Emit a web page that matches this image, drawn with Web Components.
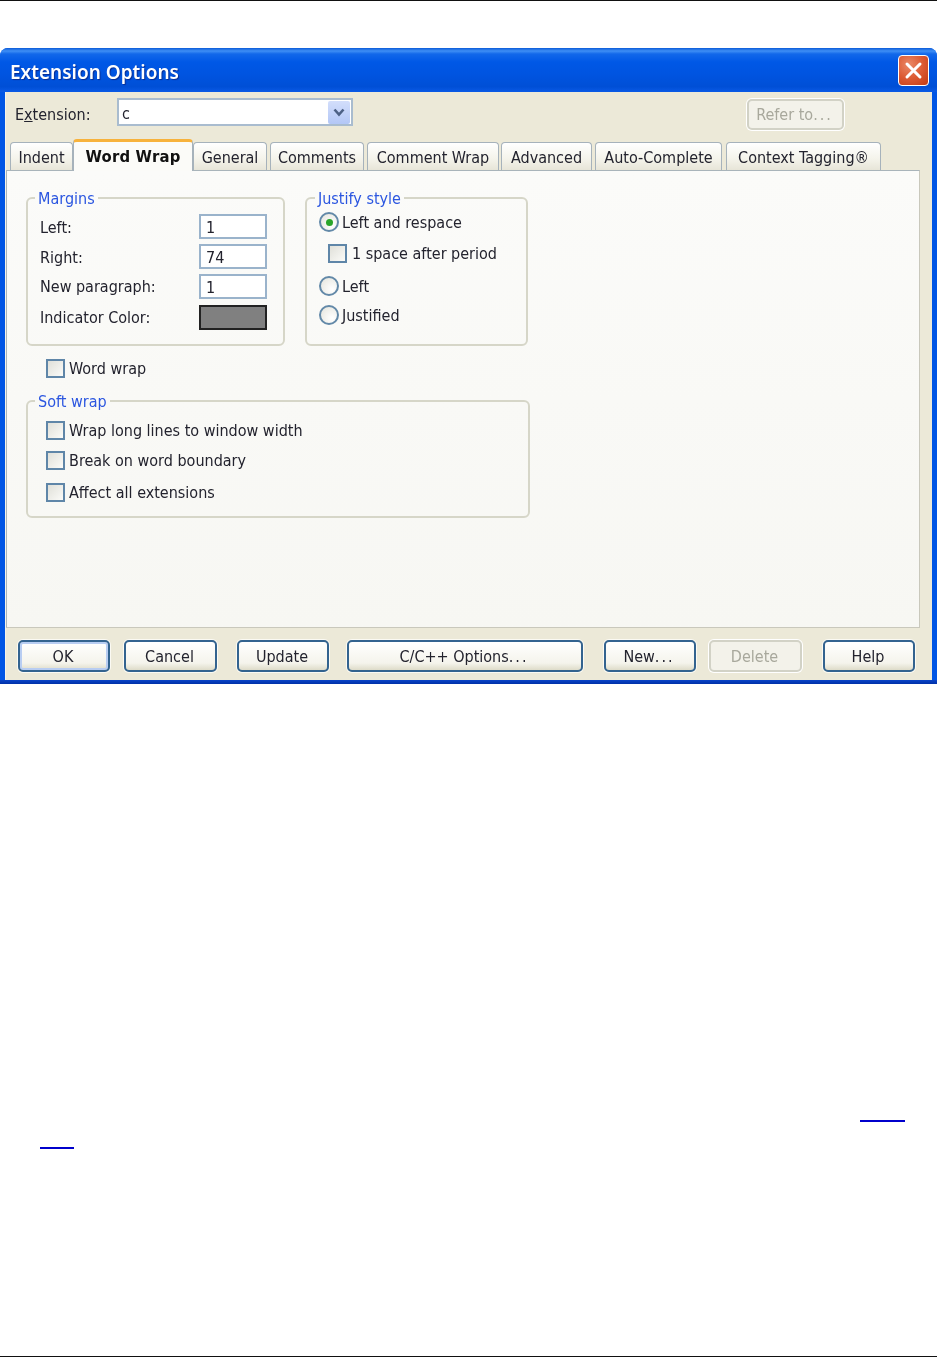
<!DOCTYPE html>
<html>
<head>
<meta charset="utf-8">
<title>Extension Options</title>
<style>
    html, body { margin: 0; padding: 0; background: #fff; }
    body { font: 16px "DejaVu Sans", "Noto Sans", sans-serif; font-stretch: condensed; color: #23232e; }
    .dots { letter-spacing: 2px; }
</style>
</head>
<body>
<ext-page>
    <ext-window>
        <span slot="title">Extension Options</span>
        <ext-toolbar>
            <span>E<u>x</u>tension:</span>
            <ext-combo>c</ext-combo>
            <ext-button disabled style="--w:97px;--h:31px;--ml:394px;--mt:1px">Refer to<span class="dots">...</span></ext-button>
        </ext-toolbar>
        <ext-tabs>
            <ext-tab style="--w:63px">Indent</ext-tab>
            <ext-tab selected style="--w:120px">Word Wrap</ext-tab>
            <ext-tab style="--w:74px;--mr:3px">General</ext-tab>
            <ext-tab style="--w:94px;--mr:3px">Comments</ext-tab>
            <ext-tab style="--w:132px;--mr:2px">Comment Wrap</ext-tab>
            <ext-tab style="--w:91px;--mr:3px">Advanced</ext-tab>
            <ext-tab style="--w:127px;--mr:4px">Auto-Complete</ext-tab>
            <ext-tab style="--w:155px">Context Tagging®</ext-tab>
        </ext-tabs>
        <ext-pane>
            <ext-columns>
                <ext-group legend="Margins" style="--w:259px;--h:157px;--pt:7px;--pl:12px;--lm:7px">
                    <ext-form>
                        <span>Left:</span><ext-field>1</ext-field>
                        <span style="--d:1px">Right:</span><ext-field>74</ext-field>
                        <span style="--d:0px">New paragraph:</span><ext-field>1</ext-field>
                        <span>Indicator Color:</span><ext-swatch></ext-swatch>
                    </ext-form>
                </ext-group>
                <ext-group legend="Justify style" style="--w:223px;--h:157px;--pt:5px;--pl:12px;--lm:8px">
                    <ext-radio checked>Left and respace</ext-radio>
                    <ext-check style="--ml:9px;--mt:11px;--cg:5px">1 space after period</ext-check>
                    <ext-radio style="--mt:13px">Left</ext-radio>
                    <ext-radio style="--mt:9px">Justified</ext-radio>
                </ext-group>
            </ext-columns>
            <ext-check style="--ml:20px;--mt:12px">Word wrap</ext-check>
            <ext-group legend="Soft wrap" style="--w:504px;--h:126px;--pt:10px;--pl:18px;--lm:7px;--gap:14px">
                <ext-check>Wrap long lines to window width</ext-check>
                <ext-check style="--mt:10px">Break on word boundary</ext-check>
                <ext-check style="--mt:12px">Affect all extensions</ext-check>
            </ext-group>
        </ext-pane>
        <ext-footer>
            <ext-button default style="--w:92px">OK</ext-button>
            <ext-button style="--w:93px;--ml:14px">Cancel</ext-button>
            <ext-button style="--w:92px;--ml:20px">Update</ext-button>
            <ext-button style="--w:236px;--ml:18px">C/C++ Options<span class="dots">...</span></ext-button>
            <ext-button style="--w:92px;--ml:21px">New<span class="dots">...</span></ext-button>
            <ext-button disabled style="--w:93px;--ml:13px">Delete</ext-button>
            <ext-button style="--w:92px;--ml:21px">Help</ext-button>
        </ext-footer>
    </ext-window>
    <ext-links></ext-links>
</ext-page>

<script>
(function () {
    // every element is a template + shadow root, only the markup differs
    function define(name, html, attrs) {
        let template = document.createElement("template");
        template.innerHTML = html;
        customElements.define(name, class extends HTMLElement {
            constructor() {
                super();
                let shadowRoot = this.attachShadow({ mode: "open" });
                shadowRoot.appendChild(template.content.cloneNode(true));
                if (attrs) attrs(this, shadowRoot);
            }
        });
    }

    define("ext-page", `
        <style>
            :host { display: block; box-sizing: border-box; height: 1357px; padding-top: 47px;
                border-top: 1px solid #111; border-bottom: 1px solid #111; }
        </style>
        <slot></slot>`);

    define("ext-links", `
        <style>
            :host { display: block; padding-top: 436px; }
            div { height: 2px; background: #0000cc; }
            #a { width: 45px; margin-left: 860px; }
            #b { width: 34px; margin-left: 40px; margin-top: 25px; }
        </style>
        <div id="a"></div><div id="b"></div>`);

    define("ext-window", `
        <style>
            :host { display: block; height: 636px; border-radius: 8px 8px 0 0; overflow: hidden;
                background: #0055e5; filter: blur(0.4px); }
            #title { box-sizing: border-box; height: 44px; display: flex; align-items: center;
                justify-content: space-between; padding: 0 8px 0 10px;
                background: linear-gradient(#0a5ad8 0, #3f8ff5 3px, #1268ea 6px, #0058e6 14px, #0054e0 60%, #004fd6 88%, #0a5ae6 100%);
                color: #fff; font: 600 19px "Noto Sans", sans-serif;
                text-shadow: 1px 1px 1px #0a2c90; }
            #title slot { display: block; padding-top: 3px; }
            #close { box-sizing: border-box; width: 31px; height: 31px; border: 1px solid #fff; border-radius: 4px;
                background: radial-gradient(circle at 35% 30%, #ea8a68, #dc5a33 50%, #c23a14 100%);
                display: flex; align-items: center; justify-content: center; }
            #client { box-sizing: border-box; height: 588px; margin: 0 5px; background: #ece9d8;
                border-left: 1px solid #f6f4ea; }
            #bottom { height: 4px; background: linear-gradient(#0a44c8, #0030a8); }
        </style>
        <div id="title">
            <slot name="title"></slot>
            <div id="close"><svg width="19" height="19" viewBox="0 0 19 19"><path d="M3 3L16 16M16 3L3 16" stroke="#fff" stroke-width="3" stroke-linecap="round"/></svg></div>
        </div>
        <div id="client"><slot></slot></div>
        <div id="bottom"></div>`);

    define("ext-toolbar", `
        <style>
            :host { display: flex; align-items: flex-start; box-sizing: border-box; height: 47px;
                padding: 6px 0 0 9px; line-height: 34px; }
            ::slotted(span) { width: 102px; display: block; }
        </style>
        <slot></slot>`);

    define("ext-combo", `
        <style>
            :host { display: flex; align-items: center; justify-content: space-between; box-sizing: border-box;
                width: 236px; height: 28px; border: 2px solid #a9bccf; background: #fff; padding: 1px 1px 1px 3px;
                line-height: 24px; }
            #text { padding-top: 3px; }
            #arrow { width: 22px; height: 23px; border-radius: 2px; display: flex; align-items: center; justify-content: center;
                background: linear-gradient(#d3defb, #b3c7f6); }
        </style>
        <div id="text"><slot></slot></div>
        <div id="arrow"><svg width="14" height="11" viewBox="0 0 14 11"><path d="M2.5 2.5L7 7.5L11.5 2.5" fill="none" stroke="#4d6185" stroke-width="2.6"/></svg></div>`);

    define("ext-tabs", `
        <style>
            :host { display: flex; align-items: flex-end; height: 31px; padding-left: 4px; }
        </style>
        <slot></slot>`);

    define("ext-tab", `
        <style>
            :host { display: flex; align-items: center; justify-content: center; box-sizing: border-box;
                width: var(--w); margin-right: var(--mr, 0); height: 28px; padding-top: 2px; white-space: nowrap;
                border: 1px solid #a6b2bb; border-bottom: 0; border-radius: 4px 4px 0 0;
                background: linear-gradient(#fff, #f4f3ea 60%, #e7e5d8); color: #23232e; }
            :host([selected]) { position: relative; z-index: 1; height: 32px; margin-bottom: -1px; padding-top: 0;
                border-top: 3px solid #f7b23c; border-color: #f7b23c #a6b2bb #a6b2bb;
                background: #fbfbf8; font-size: 16.5px; font-weight: 700; letter-spacing: 0.2px; color: #111; }
        </style>
        <slot></slot>`);

    define("ext-pane", `
        <style>
            :host { display: block; box-sizing: border-box; height: 458px; width: 914px; padding: 18px 0 0 19px;
                border: 1px solid #a9b4ba; border-right-color: #c9c8bc; border-bottom-color: #c9c8bc;
                background: linear-gradient(#fbfbf9, #f7f7f3); }
        </style>
        <slot></slot>`);

    define("ext-columns", `
        <style>
            :host { display: flex; gap: 20px; }
        </style>
        <slot></slot>`);

    define("ext-group", `
        <style>
            :host { display: block; width: var(--w); height: var(--h); margin-top: var(--gap, 0); }
            fieldset { box-sizing: border-box; margin: 0; width: 100%; height: 100%;
                padding: 0; border: 2px solid #d6d6c8; border-radius: 6px; }
            legend { margin-left: var(--lm); padding: 0 3px; height: 18px; line-height: 20px; color: #2b56e0; }
            #body { padding: var(--pt) 0 0 var(--pl); }
        </style>
        <fieldset><legend></legend><div id="body"><slot></slot></div></fieldset>`,
        (el, root) => { root.querySelector("legend").textContent = el.getAttribute("legend"); });

    define("ext-form", `
        <style>
            :host { display: grid; grid-template-columns: 159px 68px; grid-template-rows: 25px 25px 25px 25px;
                row-gap: 5px; align-items: center; }
            ::slotted(span) { padding-top: var(--d, 2px); }
        </style>
        <slot></slot>`);

    define("ext-field", `
        <style>
            :host { display: block; box-sizing: border-box; height: 25px; border: 2px solid #9ab3cb; background: #fff;
                padding-left: 5px; line-height: 23px; }
        </style>
        <slot></slot>`);

    define("ext-swatch", `
        <style>
            :host { display: block; box-sizing: border-box; height: 25px; margin-top: 2px; border: 2px solid #222; background: #808080; }
        </style>`);

    define("ext-check", `
        <style>
            :host { display: flex; align-items: center; gap: var(--cg, 4px); height: 20px; margin: var(--mt, 0) 0 0 var(--ml, 0); white-space: nowrap; }
            i { box-sizing: border-box; width: 19px; height: 19px; border: 2px solid #5f86a8;
                background: linear-gradient(135deg, #e0e0d9, #fbfbf8); }
        </style>
        <i></i><slot></slot>`);

    define("ext-radio", `
        <style>
            :host { display: flex; align-items: center; gap: 3px; height: 20px; margin-top: var(--mt, 0); white-space: nowrap; }
            i { box-sizing: border-box; width: 20px; height: 20px; border: 2px solid #6389a8; border-radius: 50%;
                display: flex; align-items: center; justify-content: center;
                background: radial-gradient(circle at 70% 70%, #fff, #e4e4dc); }
            b { display: none; width: 7px; height: 7px; border-radius: 50%; background: #2aa52a; }
            :host([checked]) b { display: block; }
        </style>
        <i><b></b></i><slot></slot>`);

    define("ext-footer", `
        <style>
            :host { display: flex; margin-top: 12px; padding-left: 12px; }
        </style>
        <slot></slot>`);

    define("ext-button", `
        <style>
            :host { display: flex; align-items: center; justify-content: center; box-sizing: border-box;
                width: var(--w); height: var(--h, 32px); margin: var(--mt, 0) 0 0 var(--ml, 0);
                padding: 1px 2px 0 0; border: 2px solid #33638f; border-radius: 5px; white-space: nowrap;
                background: linear-gradient(#fff, #f5f4ec 75%, #dedcc9); box-shadow: 0 0 0 1px #fbfaf3; color: #23232e; }
            :host([default]) { box-shadow: 0 0 0 1px #fbfaf3, inset 0 0 0 2px #b8cdf2; }
            :host([disabled]) { border-color: #d2d2c6; background: #f3f2ea; color: #a8a89c; box-shadow: 0 0 0 1px #fff; }
        </style>
        <slot></slot>`);
})();
</script>
</body>
</html>
